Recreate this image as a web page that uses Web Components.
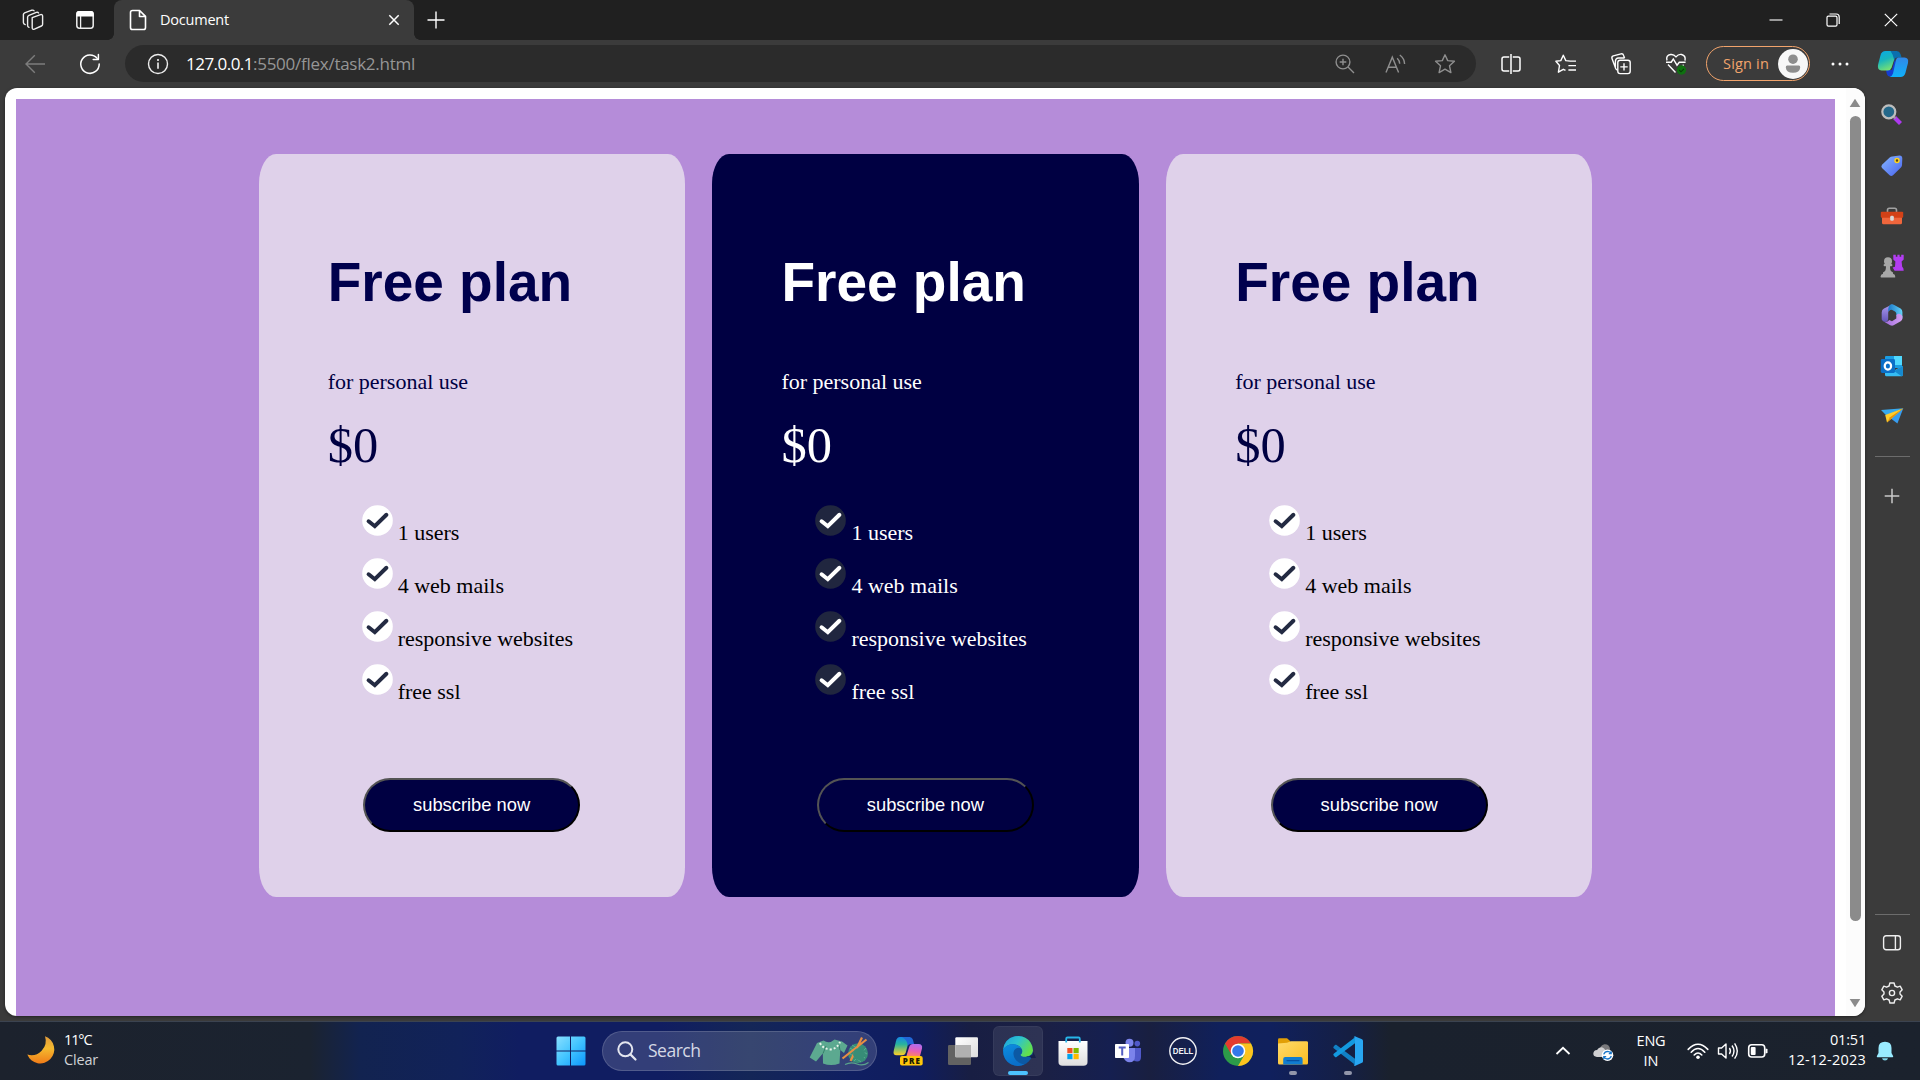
<!DOCTYPE html>
<html lang="en">
<head>
<meta charset="utf-8">
<title>Document</title>
<style>
html,body{margin:0;padding:0;width:1920px;height:1080px;overflow:hidden;background:#3b3b3b}
</style>
</head>
<body>
<desk-top></desk-top>
<script>
const ICONS = {
workspaces:[22,22,`<g fill="none" stroke="#eee" stroke-width="1.4" stroke-linejoin="round" stroke-linecap="round"><path d="M10.2 8.7 18.6 5.6Q20.5 5.3 20.6 7V15.3Q20.6 16.5 19.4 17L12.4 20.2Q10.4 20.8 10.2 19Z"/><path d="M7 18.3Q5.5 17.8 5.6 16.5V8Q5.7 6.8 7 6.3L14.3 3.4Q16 3 16.6 4"/><path d="M3.2 15.6Q1.4 15.1 1.4 13.6V5.3Q1.5 4.4 2.6 3.8L9.8 1.2Q11.5.8 12 1.8"/></g>`],
tabs:[20,20,`<rect x="1.8" y="1.8" width="16.4" height="16.4" rx="2.6" fill="none" stroke="#eee" stroke-width="1.5"/><path d="M1.3 6.5V4Q1.3 1 4 1H16Q18.7 1 18.7 4V6.5Z" fill="#fff"/><path d="M5.6 6V18" stroke="#eee" stroke-width="1.3"/>`],
doc:[18,22,`<path d="M3.5 1.5H10.6L16.5 7.4V18.4Q16.5 20.5 14.5 20.5H3.5Q1.5 20.5 1.5 18.4V3.5Q1.5 1.5 3.5 1.5ZM10.5 1.7V7.5H16.4" fill="none" stroke="#fff" stroke-width="1.6" stroke-linejoin="round"/>`],
x:[12,12,`<path d="M1.3 1.3 10.7 10.7M10.7 1.3 1.3 10.7" stroke="#fff" stroke-width="1.5"/>`],
plus:[18,18,`<path d="M9 .5V17.5M.5 9H17.5" stroke="#fff" stroke-width="1.4"/>`],
min:[14,14,`<path d="M.5 7H13.5" stroke="#fff" stroke-width="1.1"/>`],
restore:[14,14,`<rect x="1" y="3.2" width="10" height="10" rx="1.4" fill="none" stroke="#fff" stroke-width="1.2"/><path d="M3.5 1H10.3Q13.2 1 13.2 4V11" fill="none" stroke="#fff" stroke-width="1.2"/>`],
close:[14,14,`<path d="M.8.8 13.2 13.2M13.2.8.8 13.2" stroke="#fff" stroke-width="1.2"/>`],
back:[20,20,`<path d="M20 10H1.2M9.8 1.3 1 10 9.8 18.7" fill="none" stroke="#7d7d7d" stroke-width="1.4"/>`],
reload:[20,20,`<path d="M17.2 4.4A9.2 9.2 0 1 0 19.2 10" fill="none" stroke="#fff" stroke-width="1.5" stroke-linecap="round"/><path d="M18.4.6V5.6H13.2" fill="none" stroke="#fff" stroke-width="1.5" stroke-linecap="round" stroke-linejoin="round"/>`],
info:[22,22,`<circle cx="11" cy="11" r="9.5" fill="none" stroke="#eee" stroke-width="1.4"/><path d="M11 9.6V15.8" stroke="#fff" stroke-width="1.5"/><circle cx="11" cy="6.9" r="1" fill="#fff"/>`],
zoom:[20,20,`<g fill="none" stroke="#8f8f8f" stroke-width="1.4"><circle cx="8" cy="8" r="6.9"/><path d="M13 13 19 19M8 4.7V11.3M4.7 8H11.3"/></g>`],
aloud:[22,20,`<g fill="none" stroke="#8f8f8f" stroke-width="1.4"><path d="M2 18.6 8.3 3.2 14.6 18.6M4.2 13.2H12.4M13.2 4.2Q15.6 6.5 15.7 9.8M15.8 1Q20.5 4.5 20.6 10"/></g>`],
star:[22,22,`<path d="M11 1.8 13.7 7.6 20.4 8.3 15.5 12.8 16.9 19.6 11 16.1 5.1 19.6 6.5 12.8 1.6 8.3 8.3 7.6Z" fill="none" stroke="#8f8f8f" stroke-width="1.4" stroke-linejoin="round"/>`],
split:[20,20,`<path d="M8.2 3H3Q1 3 1 5V15Q1 17 3 17H8.2M11.8 3H17Q19 3 19 5V15Q19 17 17 17H11.8M10 0V20" fill="none" stroke="#fff" stroke-width="1.5"/>`],
favs:[22,20,`<g fill="none" stroke="#fff" stroke-width="1.4" stroke-linejoin="round"><path d="M15.3 7.1 10.8 6.6 8.3 1.2 5.8 6.6.9 7.2 4.5 11.5 3.4 18.2 8.3 15.3 10.5 16.4M13 7.1H21M13.4 11.6H21M13.4 16H21"/></g>`],
collect:[20,22,`<g fill="none" stroke="#fff" stroke-width="1.4"><rect x="6.8" y="7.2" width="12.4" height="13.4" rx="2.3"/><path d="M13 10.2V17.6M9.3 13.9H16.7M6.5 17Q5.2 16.6 4.7 15.4L1 5.6Q.4 3.6 2.3 2.9L10 .9Q12 .5 12.6 2.4L13.6 5M4.4 14V8.5Q4.4 5.2 7.6 5H13.6"/></g>`],
heart:[22,22,`<path d="M1 9.2H6.2L8.3 6 12 12.2 14.3 9.2H20.6M3 11.6 10.5 19.4M2 7.5Q.6 2.4 5.6 1.5 8.7 1 11 3.9 13.5.9 16.6 1.5 21 2.6 20 7.6M18.6 11.8 17.7 12.7" fill="none" stroke="#fff" stroke-width="1.4"/><circle cx="16.5" cy="17" r="4.7" fill="#0f7010"/><path d="M14.2 17 16 18.8 18.9 15.8" fill="none" stroke="#073d08" stroke-width="1.1"/>`],
avatar:[30,30,`<circle cx="15" cy="15" r="15" fill="#f7f7f7"/><circle cx="15" cy="10.2" r="4.8" fill="#8d8d8d"/><path d="M9.2 16.6H20.8Q22.4 16.6 22.2 18.5 21.7 23.8 15 23.8 8.3 23.8 7.8 18.5 7.6 16.6 9.2 16.6Z" fill="#8d8d8d"/>`],
dots:[18,6,`<g fill="#fff"><circle cx="2" cy="3" r="1.5"/><circle cx="9" cy="3" r="1.5"/><circle cx="16" cy="3" r="1.5"/></g>`],
copilot:[32,28,`<defs><linearGradient id="a" x1="0" y1="0" x2=".4" y2="1"><stop stop-color="#08a9e8"/><stop offset=".5" stop-color="#18b5bd"/><stop offset="1" stop-color="#73df76"/></linearGradient><linearGradient id="b" x1="0" y1="0" x2="0" y2="1"><stop stop-color="#3188e9"/><stop offset="1" stop-color="#0fb1fa"/></linearGradient></defs><path d="M9 20H15L18 9 21 19 16.5 26.8H13.5Q10.5 26.5 9.8 24Z" fill="#143ed2"/><path d="M8.5 1H20L14.6 17.5Q13.6 20.4 11 20.4H4.5Q.2 20.2 1 15L3.6 5Q4.8 1.2 8.5 1Z" fill="url(#a)"/><path d="M17 1H19.5Q22.6 1.2 23.5 4L24.6 7.6H21Q18 7.6 17.2 10Q16.5 5 13.5 1Z" fill="#0a6fae"/><path d="M21 7.6H27.5Q32 7.8 31 13L28.4 23Q27.2 26.8 23.5 27H12.5Q15 26.4 16 23.4L19 10Q19.5 7.7 21 7.6Z" fill="url(#b)"/>`],
search:[24,24,`<path d="M14.5 14.5 20.5 20.5" stroke="#ad39ef" stroke-width="4.2"/><path d="M12.5 12.5 15.5 15.5" stroke="#999" stroke-width="2"/><circle cx="8.8" cy="8.8" r="6.5" fill="#24688a" stroke="#bdbdbd" stroke-width="2.2"/>`],
tag:[24,24,`<defs><linearGradient id="a" x2="1" y2="1"><stop stop-color="#86b8ff"/><stop offset="1" stop-color="#4963ef"/></linearGradient></defs><path d="M12.2 2.5 19.5 1.5Q22.3 1.5 22.3 4.4L22 11.2Q21.8 12.5 20.9 13.4L13 21.2Q11.3 22.6 9.6 21.2L2 14Q.7 12.4 2 10.7L9.7 3.6Q10.8 2.6 12.2 2.5Z" fill="url(#a)"/><circle cx="17" cy="6.6" r="2" fill="#5a4b10" stroke="#ffd21f" stroke-width="1.5"/>`],
toolbox:[24,20,`<path d="M7.5 6.5V4Q7.5 2.2 9.3 2.2H14.7Q16.5 2.2 16.5 4V6.5" fill="none" stroke="#a2a2a2" stroke-width="1.6"/><rect x="2" y="10" width="20" height="8.3" rx="1.5" fill="#f0663c"/><rect x=".8" y="5.8" width="22.4" height="6" rx="1" fill="#d34117"/><rect x="10.2" y="9.8" width="3.6" height="5" rx="1.4" fill="#d8d8d8"/>`],
chess:[24,24,`<path d="M13.3.8H15.8V2.8H17.4V.8H19.6V2.8H21.2V.8H23.7V5.6L21.6 7.6 22.2 12.8Q23.7 14 23.7 16.8H14.6L12.6 13.4 15 12.8 15.4 7.6 13.3 5.6Z" fill="#b33df2"/><g fill="#a7a7a7"><circle cx="8" cy="7.2" r="4"/><rect x="3.6" y="10" width="8.8" height="2.2" rx="1"/><path d="M6 12H10Q10 16.8 11.6 17.6L13 18.4V19.8Q15.3 20.4 15.3 23Q15.3 23.6 14.5 23.6H1.3Q.5 23.6.5 22.8.6 20.4 3 19.8V18.4L4.4 17.6Q6 16.8 6 12Z"/></g>`],
m365:[24,24,`<defs><linearGradient id="a" x1="0" y1="0" x2="0" y2="1"><stop stop-color="#ad9cf0"/><stop offset="1" stop-color="#6355b8"/></linearGradient><linearGradient id="b"><stop stop-color="#1877c9"/><stop offset="1" stop-color="#64d3f7"/></linearGradient><linearGradient id="c"><stop stop-color="#9b66db"/><stop offset="1" stop-color="#d4a1f3"/></linearGradient></defs><path d="M12.6 1.2 4 5.6Q1.7 6.8 1.7 9.6V16.5Q2.4 18.8 5.5 19 8.4 18.6 8.2 15V9.8Q8.2 8 9.6 7.2Z" fill="url(#a)"/><path d="M10.6 1.4Q12.2.9 13.8 1.7L20.6 5.4Q22.4 6.6 22.4 9V15.4Q20 15.2 16.3 12.6V10.6Q16.3 9.2 15 8.4L12.2 7Q10 6.4 8.2 8.5 8 2.6 10.6 1.4Z" fill="url(#b)"/><path d="M22.4 13V15.6Q22.4 17.4 20.7 18.3L13.6 22.3Q12 23.1 10.2 22.2L2.8 18Q6.5 20.2 9.3 16.9L12 18.2 16.3 15.6V12.2Q19 9 22.4 13Z" fill="url(#c)"/>`],
outlook:[24,24,`<rect x="5" y="2" width="17" height="12" rx="1" fill="#1b9de2"/><path d="M14 2H22V11H14Z" fill="#50d9ff"/><path d="M5 12 13 17 22.8 12V21Q22.8 22.2 21.6 22.2H6Q5 22 5 21Z" fill="#35bdf4"/><path d="M22.8 12V21Q22.8 22.2 21.6 22.2L14 17Z" fill="#1689cf"/><rect x=".8" y="5" width="14.2" height="14" rx="1.4" fill="#0b6fc7"/><ellipse cx="7.9" cy="12" rx="3.2" ry="3.6" fill="none" stroke="#fff" stroke-width="2.2"/>`],
plane:[24,24,`<path d="M23.3 4.3 1 6 6.6 11.8Z" fill="#37a9ef"/><path d="M23.3 4.3 17.4 19.4 10.2 14Z" fill="#389df0"/><path d="M23.3 4.3 5.2 11 7 18.6Z" fill="#ffcd2c"/><path d="M23.3 4.3 10 13.2 7 18.6Z" fill="#e5930c"/>`],
splus:[16,16,`<path d="M8 .7V15.3M.7 8H15.3" stroke="#c9c9c9" stroke-width="1.5"/>`],
panel:[20,18,`<rect x="1.6" y="1.8" width="16.8" height="14" rx="2.5" fill="none" stroke="#eee" stroke-width="1.4"/><path d="M13.4 2V16" stroke="#eee" stroke-width="1.4"/>`],
gear:[24,24,`<path d="M9.9 2H14.1L14.9 5 17.4 6.2 20.2 5.2 22.2 8.8 20 11V13L22.2 15.2 20.2 18.8 17.4 17.8 14.9 19 14.1 22H9.9L9.1 19 6.6 17.8 3.8 18.8 1.8 15.2 4 13V11L1.8 8.8 3.8 5.2 6.6 6.2 9.1 5Z" fill="none" stroke="#eee" stroke-width="1.4" stroke-linejoin="round"/><circle cx="12" cy="12" r="2.6" fill="none" stroke="#eee" stroke-width="1.4"/>`],
moon:[28,28,`<defs><linearGradient id="a" x1="0" y1="0" x2="0" y2="1"><stop stop-color="#e19b3c"/><stop offset=".45" stop-color="#f4b92f"/><stop offset="1" stop-color="#f07c18"/></linearGradient></defs><path d="M18 .2A14 14 0 1 1 .3 18.6 14.5 14.5 0 0 0 18 .2Z" fill="url(#a)"/>`],
win:[30,30,`<defs><linearGradient id="a" gradientUnits="userSpaceOnUse" x2="30" y2="30"><stop stop-color="#8be0ff"/><stop offset=".5" stop-color="#42c4ff"/><stop offset="1" stop-color="#0a94fb"/></linearGradient></defs><path d="M2 .5H14V14.5H.5V2Q.5.5 2 .5ZM15 .5H28Q29.5.5 29.5 2V14.5H15ZM.5 15.5H14V29.5H2Q.5 29.5.5 28ZM15 15.5H29.5V28Q29.5 29.5 28 29.5H15Z" fill="url(#a)"/>`],
glass:[20,20,`<circle cx="8.3" cy="8.3" r="7" fill="none" stroke="#e4e6ef" stroke-width="2"/><path d="M13.4 13.4 18.5 18.5" stroke="#e4e6ef" stroke-width="2.2" stroke-linecap="round"/>`],
knit:[60,30,`<path d="M14.5 4.5Q20 8.5 25.5 3.5L33 5.5 38.5 9.5 35 17 31.3 14 30.5 27.5Q22 30.5 14 27.5L13.8 17.5 7 25.5.7 21.5 8 7Z" fill="#5ca990"/><path d="M14 17.5 17 10M31 14 30 9" stroke="#37806b" stroke-width="1"/><path d="M11 7Q14 13 21 13.4 28 13 31 6" fill="none" stroke="#e8f3e9" stroke-width="2" stroke-dasharray="2 2"/><circle cx="49" cy="17.2" r="10" fill="#378d77"/><path d="M41 12 56 22M43 9 58 18M40 17 52 26M45 25 57 12" stroke="#68b99e" stroke-width=".7"/><path d="M33.5 22.5 57.5 3.5M41.5 25 53 1.5" stroke="#e78e43" stroke-width="2.2"/><circle cx="50" cy="18" r="6" fill="#378d77"/><path d="M36 28.5Q42 25.5 48 28T59.5 26.5" fill="none" stroke="#5ba58c" stroke-width="1.2"/>`],
copre:[30,30,`<defs><linearGradient id="a" x1="0" y1="0" x2="0" y2="1"><stop stop-color="#1686e8"/><stop offset=".4" stop-color="#28b39d"/><stop offset="1" stop-color="#ffd025"/></linearGradient><linearGradient id="b" x1=".2" y1="0" x2="0" y2="1"><stop stop-color="#b26bea"/><stop offset=".5" stop-color="#e75fb7"/><stop offset="1" stop-color="#ff8a58"/></linearGradient></defs><path d="M7 1H17L12.6 17Q11.8 19.3 9 19.3H3.5Q-.2 19.3.7 15L3 5Q4 1.2 7 1Z" fill="url(#a)"/><path d="M9 1H16Q19 1 20 4L21 8H18Q15.5 8 14.8 10 14.5 4 9 1Z" fill="#2167d8"/><path d="M20 8H25.5Q29.8 8 29 12.5L27 20H13.4L16.2 11Q17 8 20 8Z" fill="url(#b)"/><rect x="7" y="20" width="22.7" height="9.5" rx="2" fill="#ffc60a"/><text x="18.3" y="27.6" font-family="Open Sans,sans-serif" font-weight="800" font-size="8" text-anchor="middle" textLength="17" fill="#201a05">PRE</text>`],
taskview:[30,30,`<defs><linearGradient id="a" x2="1" y2="1"><stop stop-color="#fff"/><stop offset="1" stop-color="#ddd"/></linearGradient></defs><rect x="0" y="9" width="23" height="20" rx="1.2" fill="#626262"/><rect x="7.3" y="1.2" width="22.7" height="20" rx="1.2" fill="url(#a)"/><path d="M7.3 9H23V21.2H7.3Z" fill="#b0b0b0"/>`],
edge:[30,30,`<defs><linearGradient id="a" x2="1" y2=".5"><stop stop-color="#1d9fdd"/><stop offset=".5" stop-color="#2dc3cf"/><stop offset="1" stop-color="#63df4b"/></linearGradient><linearGradient id="b" x2=".4" y2="1"><stop stop-color="#0c8ee0"/><stop offset="1" stop-color="#0a6ec8"/></linearGradient></defs><circle cx="15" cy="15" r="15" fill="#0c59a4"/><path d="M.1 14Q1 3 12 .3 22-1.5 27.5 6.5 30 10.2 30 14.5 29.5 20 23 20.8 18 21 17.6 18.8 20 17 19 13.5 17 9 10.5 8.2 3 8.2.1 14Z" fill="url(#a)"/><path d="M.1 14Q3.2 8 10.5 8.3 16.5 8.6 18.8 12.8 14 10.2 11.2 14.2 9 19 12.7 23.7 17 28.3 21.5 28.4 15 31.4 8 28.3 0 24 .1 14Z" fill="url(#b)"/><path d="M17.6 18.8Q18 21 23 20.8 27 20.5 29 18.4L28.6 22Q25 20 23 20.8Q18 21 17.6 18.8ZM28 22Q29.7 19.2 30 15.5L33 22Z" fill="#17204b"/>`],
store:[30,30,`<defs><linearGradient id="a" x1="0" y1="0" x2="0" y2="1"><stop stop-color="#fff"/><stop offset="1" stop-color="#dedede"/></linearGradient></defs><path d="M.5 5H29.5V26Q29.5 29.8 25.5 29.8H4.5Q.5 29.8.5 26Z" fill="url(#a)"/><path d="M8.2 6.5V2.8Q8.2 1.5 9.5 1.5H20.5Q21.8 1.5 21.8 2.8V6.5" fill="none" stroke="#27b5e8" stroke-width="1.8"/><path d="M9.3 12H14.5V17.2H9.3Z" fill="#f25022"/><path d="M15.5 12H20.7V17.2H15.5Z" fill="#7fba00"/><path d="M9.3 18H14.5V23.2H9.3Z" fill="#00a4ef"/><path d="M15.5 18H20.7V23.2H15.5Z" fill="#ffb900"/>`],
teams:[30,30,`<circle cx="24.3" cy="7.6" r="2.8" fill="#5059c9"/><circle cx="16.5" cy="6.8" r="4" fill="#7b83eb"/><path d="M20 12H28V21Q28 25.5 24 25.5 21 25.5 20 23Z" fill="#5059c9"/><path d="M10 12H22V20Q22 26.3 16.5 26.3 12.5 26.3 10 21Z" fill="#7b83eb"/><rect x="2" y="8" width="14" height="14" rx=".8" fill="#fff"/><path d="M5.7 11.5H12.7M9.2 11.5V19.5" stroke="#555fc4" stroke-width="2"/>`],
dell:[30,30,`<circle cx="15" cy="15" r="13.2" fill="none" stroke="#f1f1f4" stroke-width="1.4"/><text x="15" y="18.2" font-family="Liberation Sans,sans-serif" font-weight="700" font-size="9" text-anchor="middle" textLength="20.5" lengthAdjust="spacingAndGlyphs" fill="#f1f1f4">DELL</text>`],
chrome:[30,30,`<circle cx="15" cy="15" r="15" fill="#2c9b49"/><path d="M2 7.5A15 15 0 0 1 28 7.5L15 7.5 8.5 18.75Z" fill="#e33b2e"/><path d="M28 7.5A15 15 0 0 1 15 30L21.5 18.75 15 7.5Z" fill="#fcc31e"/><circle cx="15" cy="15" r="7.3" fill="#fff"/><circle cx="15" cy="15" r="5.8" fill="#3478ea"/>`],
folder:[30,30,`<defs><linearGradient id="a" x2="1" y2="1"><stop stop-color="#ffda6b"/><stop offset="1" stop-color="#fbbd21"/></linearGradient></defs><path d="M0 3.5Q0 2.3 1.3 2.3H9L12.4 5.3V9H0Z" fill="#e29f06"/><path d="M0 7.6 9 6.8 13 5.2H28.5Q30 5.2 30 6.5V27Q30 28.5 28.6 28.5H1.4Q0 28.5 0 27Z" fill="url(#a)"/><path d="M5.2 28.5V23Q5.2 21 7.2 21H22.6Q24.6 21 24.6 23V28.5Z" fill="#117dd0"/><path d="M9 24.6H21" stroke="#0752a3" stroke-width="1.2" stroke-linecap="round"/>`],
code:[30,30,`<path d="M3.2 8.8 23 23.6V29.6L.7 12.3Q-.2 11.4.7 10.5L2 9Q2.6 8.4 3.2 8.8Z" fill="#1180c5"/><path d="M3.2 21.2 23 6.4V.4L.7 17.7Q-.2 18.6.7 19.5L2 21Q2.6 21.6 3.2 21.2Z" fill="#1399e0"/><path d="M21.8.2 29 3.3Q30 3.8 30 4.9V25.2Q30 26.2 29 26.7L21.8 29.9 20.5 28.8Q22 29 22 27.5V2.5Q22 1 20.5 1.2Z" fill="#28a6f2"/>`],
chev:[16,10,`<path d="M1.5 8 8 1.8 14.5 8" fill="none" stroke="#fff" stroke-width="1.8"/>`],
cloud:[22,20,`<path d="M7.5 10Q8 3.8 12.5 3.2 17.5 3 18 8V13H9Z" fill="#79797c"/><path d="M5 16Q1.3 15.8 1.3 12.6 1.5 9.3 5 9 7 5.7 10.5 6.5 14 8.5 14.5 12V16Z" fill="#cfcfd1"/><circle cx="15.5" cy="14.2" r="5.8" fill="#fff"/><path d="M11.7 13.4Q12.8 10.4 15.8 10.4 18 10.6 19.1 12.4M19.3 15Q18.2 18 15.2 18 13 17.8 11.9 16M19.2 10.2V12.7H16.8M11.8 18.2V15.7H14.2" fill="none" stroke="#1976c9" stroke-width="1.3"/>`],
wifi:[22,18,`<g fill="none" stroke="#fff" stroke-width="1.6"><path d="M1.2 7.4Q11-2.8 20.8 7.4M4.2 10.2Q11 2.8 17.8 10.2M7.2 13Q11 9 14.8 13" stroke-linecap="round"/></g><circle cx="11" cy="15.3" r="1.8" fill="#fff"/>`],
vol:[22,20,`<path d="M1.5 7V13H4.6L9 17V3L4.6 7ZM12.4 7Q14.5 10 12.4 13M15 4.5Q19 10 15 15.5M17.6 2.3Q23 10 17.6 17.7" fill="none" stroke="#fff" stroke-width="1.4" stroke-linejoin="round"/>`],
bat:[22,16,`<rect x="1.7" y="1.8" width="16" height="12.2" rx="3" fill="none" stroke="#fff" stroke-width="1.6"/><rect x="3.8" y="4" width="4.8" height="8" rx="1" fill="#fff"/><path d="M18.5 5.5 20.5 6V10L18.5 10.5Z" fill="#fff"/>`],
bell:[18,20,`<path d="M9 .8Q15.5.8 15.5 7V12L17.2 15.2Q17.3 16.2 16.5 16.2H1.5Q.7 16.2.8 15.2L2.5 12V7Q2.5.8 9 .8Z" fill="#99ebff"/><path d="M6 17.3H12Q11.5 19.5 9 19.5 6.5 19.5 6 17.3Z" fill="#7fd3e8"/>`],
up:[12,10,`<path d="M6 .8 11.3 9H.7Z" fill="#8b8b8b"/>`],
down:[12,10,`<path d="M6 9.2 11.3 1H.7Z" fill="#8b8b8b"/>`],
check:[31,31,`<circle cx="15.5" cy="15.5" r="15.3" fill="var(--disc,#fff)"/><path d="M6.6 16.3 12.8 21.2 24.4 9.8" fill="none" stroke="var(--tick,#232a42)" stroke-width="4" stroke-linecap="round"/>`]
};

function define(name, html, init) {
  const t = document.createElement('template');
  t.innerHTML = html;
  customElements.define(name, class extends HTMLElement {
    connectedCallback() {
      if (this.shadowRoot) return;
      this.attachShadow({mode: 'open'}).appendChild(t.content.cloneNode(true));
      if (init) init(this, this.shadowRoot);
    }
  });
}

// Icon centred in a cell; w and h set the size of the cell.
define('ui-icon', `<style>:host{display:flex;align-items:center;justify-content:center;flex:none}svg{display:block;flex:none;overflow:visible}</style>`, (el, root) => {
  const [w, h, body] = ICONS[el.getAttribute('name')];
  if (el.hasAttribute('w')) el.style.width = el.getAttribute('w') + 'px';
  if (el.hasAttribute('h')) el.style.height = el.getAttribute('h') + 'px';
  root.innerHTML += `<svg width="${w}" height="${h}" viewBox="0 0 ${w} ${h}">${body}</svg>`;
});

// One-line label spaced to a given width.
define('ui-label', `<style>:host{display:block;flex:none;white-space:nowrap;font-family:"Open Sans",sans-serif}span{display:inline-block}</style><span><slot></slot></span>`, (el, root) => {
  const w = +el.getAttribute('w'), n = el.textContent.length, s = root.querySelector('span');
  s.style.letterSpacing = ((w - s.getBoundingClientRect().width) / n) + 'px';
  el.style.width = w + 'px';
});

define('tab-strip', `<style>
:host{display:flex;height:40px;background:#202020;align-items:center}
.tab{display:flex;align-items:center;width:300px;height:40px;background:#3b3b3b;border-radius:8px 8px 0 0;margin-left:14px;color:#fff;position:relative}
.tab::before,.tab::after{content:"";position:absolute;bottom:0;width:6px;height:6px;background:radial-gradient(circle at 0 0,transparent 5.5px,#3b3b3b 6px)}
.tab::before{left:-6px}.tab::after{right:-6px;transform:scaleX(-1)}
ui-label{font-size:14.5px;line-height:20px;margin-left:13px}
.sp{flex:1}
</style>
<ui-icon name="workspaces" w="65"></ui-icon><ui-icon name="tabs" w="40" style="margin-right:-5px"></ui-icon>
<div class="tab"><ui-icon name="doc" w="18" style="margin-left:15px"></ui-icon><ui-label w="69">Document</ui-label><div class="sp"></div><ui-icon name="x" w="40"></ui-icon></div>
<ui-icon name="plus" w="43"></ui-icon><div class="sp"></div>
<ui-icon name="min" w="57"></ui-icon><ui-icon name="restore" w="58"></ui-icon><ui-icon name="close" w="58"></ui-icon>`);

define('tool-bar', `<style>
:host{display:flex;height:48px;background:#3b3b3b;align-items:center}
.addr{display:flex;align-items:center;width:1351px;height:37px;border-radius:19px;background:#2b2b2b;margin-bottom:1px;color:#fff;font-size:17px}
ui-label{line-height:24px}
.path{color:#969696}.sp{flex:1}
.sign{display:flex;align-items:center;justify-content:space-between;box-sizing:border-box;width:104px;height:35px;border:1.5px solid #f2a46c;border-radius:18px;padding:0 1px 0 16px;color:#f2a46c;font-size:14.5px;margin:0 0 1px 10px}
</style>
<ui-icon name="back" w="70"></ui-icon><ui-icon name="reload" w="40"></ui-icon>
<div class="addr" style="margin-left:15px"><ui-icon name="info" w="65"></ui-icon><ui-label w="67" style="margin-left:-4px">127.0.0.1</ui-label><ui-label class="path" w="162">:5500/flex/task2.html</ui-label><div class="sp"></div>
<ui-icon name="zoom" w="50"></ui-icon><ui-icon name="aloud" w="50"></ui-icon><ui-icon name="star" w="50"></ui-icon><span style="width:6px"></span></div>
<ui-icon name="split" w="69"></ui-icon><ui-icon name="favs" w="41"></ui-icon><ui-icon name="collect" w="70"></ui-icon><ui-icon name="heart" w="40"></ui-icon>
<div class="sign"><ui-label w="46">Sign in</ui-label><ui-icon name="avatar"></ui-icon></div>
<ui-icon name="dots" w="60"></ui-icon><ui-icon name="copilot" w="46"></ui-icon>`);

define('plan-card', `<style>
:host{display:flex;flex-direction:column;align-items:flex-start;box-sizing:border-box;flex:none;width:426.25px;height:743px;padding:97px 0 0 69px;border-radius:4%;background:#dfd1ea;color:#000042;font:22px/25px "Liberation Serif",serif;--item:#000}
:host([dark]){background:#000042;color:#fff;--item:#fff;--disc:#20263f;--tick:#fff}
h1{margin:0;font:bold 55px/63px "Liberation Sans",sans-serif;white-space:nowrap;color:#00004d}
:host([dark]) h1{color:#fff}
.for{margin-top:55px}.price{margin-top:23px;font-size:50.5px;line-height:57px}
ul{list-style:none;margin:31px 0 0 34px;padding:0;color:var(--item)}
li{display:flex;height:53px;align-items:flex-start;gap:5px;white-space:nowrap}
li span{padding-top:14.6px}
button{margin:61px 0 0 35.5px;box-sizing:border-box;width:217px;height:54px;border:2px outset #000;border-radius:27px;background:#000042;color:#fff;font:18.33px "Liberation Sans",sans-serif;padding:0}
</style>
<h1>Free plan</h1><div class="for">for personal use</div><div class="price">$0</div>
<ul><li><ui-icon name="check"></ui-icon><span>1 users</span></li><li><ui-icon name="check"></ui-icon><span>4 web mails</span></li><li><ui-icon name="check"></ui-icon><span>responsive websites</span></li><li><ui-icon name="check"></ui-icon><span>free ssl</span></li></ul>
<button>subscribe now</button>`);

define('page-view', `<style>
:host{display:flex;box-sizing:border-box;width:1860px;height:928px;margin-left:5px;background:#fff;border-radius:12px;overflow:hidden;box-shadow:0 1px 3px #222}
.main{display:flex;justify-content:center;align-items:flex-start;gap:27.5px;box-sizing:border-box;width:1819px;margin:11px 0 0 11px;padding-top:55px;background:#b58cd9}
.bar{display:flex;flex-direction:column;align-items:center;width:19px;margin-left:11px;background:#fcfcfc;box-sizing:border-box;padding:10px 1px 8px 0}
.thumb{width:11px;height:805px;border-radius:6px;background:#8b8b8b;margin-top:8px}.sp{flex:1}
</style>
<div class="main"><plan-card></plan-card><plan-card dark></plan-card><plan-card></plan-card></div>
<div class="bar"><ui-icon name="up"></ui-icon><div class="thumb"></div><div class="sp"></div><ui-icon name="down"></ui-icon></div>`);

define('side-bar', `<style>
:host{display:flex;flex-direction:column;align-items:center;width:54px;height:933px}
hr{width:35px;height:1px;border:0;background:#6c6c6c;margin:0}.sp{flex:1}
</style>
<ui-icon name="search" h="54"></ui-icon><ui-icon name="tag" h="48"></ui-icon><ui-icon name="toolbox" h="51"></ui-icon><ui-icon name="chess" h="49"></ui-icon><ui-icon name="m365" h="50"></ui-icon><ui-icon name="outlook" h="51"></ui-icon><ui-icon name="plane" h="49"></ui-icon>
<hr style="margin-top:16px"><ui-icon name="splus" h="78"></ui-icon><div class="sp"></div><hr><ui-icon name="panel" h="56"></ui-icon><ui-icon name="gear" h="43"></ui-icon><span style="height:7px"></span>`);

define('task-app', `<style>
:host{display:flex;flex-direction:column;align-items:center;box-sizing:border-box;width:50px;height:50px;margin:0 2.5px;padding-top:10px;border-radius:6px;flex:none}
:host([active]){background:#ffffff16;box-shadow:inset 0 0 0 1px #ffffff0c}
i{width:8px;height:4px;border-radius:2px;background:#9296aa;margin-top:5px;display:none}
:host([open]) i{display:block}:host([active]) i{display:block;width:20px;background:#4cc2ff}
</style><slot></slot><i></i>`);

define('task-bar', `<style>
:host{display:flex;position:relative;box-sizing:border-box;height:59px;border-top:1px solid #3b4350;color:#fff;font-size:14.5px;background:linear-gradient(90deg,#1c222d 0,#1b2330 310px,#122350 360px,#11225a 460px,#101d61 520px,#101d61 660px,#142657 750px,#101f62 850px,#101d5d 920px,#181e43 970px,#1b2044 1040px,#151f50 1110px,#191f40 1150px,#10205b 1220px,#10205d 1270px,#151f43 1350px,#1a212d 1390px,#1b222d 100%)}
.two{display:flex;flex-direction:column;box-sizing:border-box;height:57px;padding-top:8px;line-height:20px;flex:none}
.apps{display:flex;align-items:center;height:57px;margin-left:444px}
.search{display:flex;align-items:center;box-sizing:border-box;width:275px;height:40px;border-radius:20px;border:1px solid #ffffff26;background:#ffffff26;margin:0 3px 0 4px;padding:0 7px 0 14px;font-size:17.5px;color:#d5d8e5;flex:none}
.search ui-label{margin:0 0 1px 11px}
.tray{display:flex;align-items:center;height:57px;margin-left:auto}
.sp{flex:1}.r{align-items:flex-end}.c{align-items:center}
</style>
<ui-icon name="moon" style="margin:0 0 2px 26.5px"></ui-icon>
<div class="two" style="margin-left:9.5px;width:35px"><ui-label w="27.5">11°C</ui-label><ui-label w="34" style="color:#d0d2d6">Clear</ui-label></div>
<div class="apps">
<task-app><ui-icon name="win"></ui-icon></task-app>
<div class="search"><ui-icon name="glass"></ui-icon><ui-label w="52.5">Search</ui-label><div class="sp"></div><ui-icon name="knit"></ui-icon></div>
<task-app><ui-icon name="copre"></ui-icon></task-app><task-app><ui-icon name="taskview"></ui-icon></task-app><task-app active><ui-icon name="edge"></ui-icon></task-app><task-app><ui-icon name="store"></ui-icon></task-app><task-app><ui-icon name="teams"></ui-icon></task-app><task-app><ui-icon name="dell"></ui-icon></task-app><task-app><ui-icon name="chrome"></ui-icon></task-app><task-app open><ui-icon name="folder"></ui-icon></task-app><task-app open><ui-icon name="code"></ui-icon></task-app>
</div>
<div class="tray"><ui-icon name="chev" w="40"></ui-icon><ui-icon name="cloud" w="40"></ui-icon>
<div class="two c" style="width:57px;padding:9px 3px 0 0;margin-left:1px"><ui-label w="29">ENG</ui-label><ui-label w="15">IN</ui-label></div>
<ui-icon name="wifi" w="34"></ui-icon><ui-icon name="vol" w="26"></ui-icon><ui-icon name="bat" w="34"></ui-icon>
<div class="two r" style="width:91px"><ui-label w="36">01:51</ui-label><ui-label w="78">12-12-2023</ui-label></div>
<ui-icon name="bell" w="38" style="margin-right:16px"></ui-icon></div>`);

define('desk-top', `<style>:host{display:flex;flex-direction:column;width:1920px;height:1080px;background:#3b3b3b}.row{display:flex;height:933px}</style>
<tab-strip></tab-strip><tool-bar></tool-bar><div class="row"><page-view></page-view><side-bar></side-bar></div><task-bar></task-bar>`);
</script>
</body>
</html>
